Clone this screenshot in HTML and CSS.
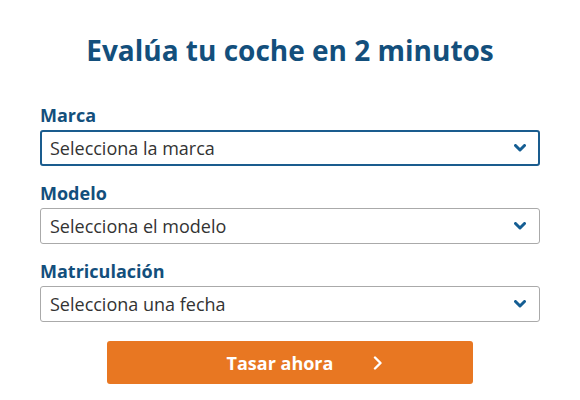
FILE: index.html
```html
<!DOCTYPE html>
<html lang="es">
<head>
    <meta charset="UTF-8">
    <meta name="viewport" content="width=device-width, initial-scale=1.0">
    <title>Evalúa tu coche</title>
    <link rel="stylesheet" href="styles.css">
</head>
<body>
    <div class="container">
        <h1>Evalúa tu coche en 2 minutos</h1>

        <label for="marca">Marca</label>
        <div class="select-wrap">
            <select id="marca" class="active">
                <option>Selecciona la marca</option>
            </select>
            <svg class="chevron" viewBox="0 0 12 8"><path d="M1.5 1.5 L6 6 L10.5 1.5"/></svg>
        </div>

        <label for="modelo">Modelo</label>
        <div class="select-wrap">
            <select id="modelo">
                <option>Selecciona el modelo</option>
            </select>
            <svg class="chevron" viewBox="0 0 12 8"><path d="M1.5 1.5 L6 6 L10.5 1.5"/></svg>
        </div>

        <label for="fecha">Matriculación</label>
        <div class="select-wrap">
            <select id="fecha">
                <option>Selecciona una fecha</option>
            </select>
            <svg class="chevron" viewBox="0 0 12 8"><path d="M1.5 1.5 L6 6 L10.5 1.5"/></svg>
        </div>

        <button class="submit">
            <span>Tasar ahora</span>
            <svg class="arrow" viewBox="0 0 10 14"><path d="M2 1.5 L7.5 7 L2 12.5"/></svg>
        </button>
    </div>
</body>
</html>
```

FILE: styles.css
```css
body { margin: 0; background: #fff; font-family: "Open Sans", "Liberation Sans", sans-serif; color: #333; }
.container { width: 500px; margin: 0 auto; padding-top: 32px; }
h1 { margin: 0 0 35px; font-size: 28px; line-height: 36px; font-weight: 700; color: #134f7c; text-align: center; }
label { display: block; font-size: 18px; line-height: 24px; font-weight: 700; color: #134f7c; margin-bottom: 3px; }
.select-wrap { position: relative; margin-bottom: 15px; }
select { display: block; width: 100%; height: 36px; padding: 0 40px 0 9px; font-family: inherit; font-size: 18px; color: #333; background: #fff; border: 1px solid #aaa; border-radius: 3px; appearance: none; -webkit-appearance: none; outline: none; }
select.active { border: 2px solid #1a5c8e; padding-left: 8px; }
.chevron { position: absolute; right: 14px; top: 14px; width: 12px; height: 8px; pointer-events: none; }
.chevron path { fill: none; stroke: #155e93; stroke-width: 3; stroke-linecap: round; stroke-linejoin: round; }
.submit { display: flex; align-items: center; justify-content: center; gap: 40px; width: 366px; height: 43px; margin: 19px auto 0; padding: 0 0 0 30px; background: #e87722; color: #fff; border: none; border-radius: 3px; font-family: inherit; font-size: 18px; font-weight: 700; cursor: pointer; }
.arrow { width: 10px; height: 14px; }
.arrow path { fill: none; stroke: #fff; stroke-width: 2.4; stroke-linecap: round; stroke-linejoin: round; }
```
